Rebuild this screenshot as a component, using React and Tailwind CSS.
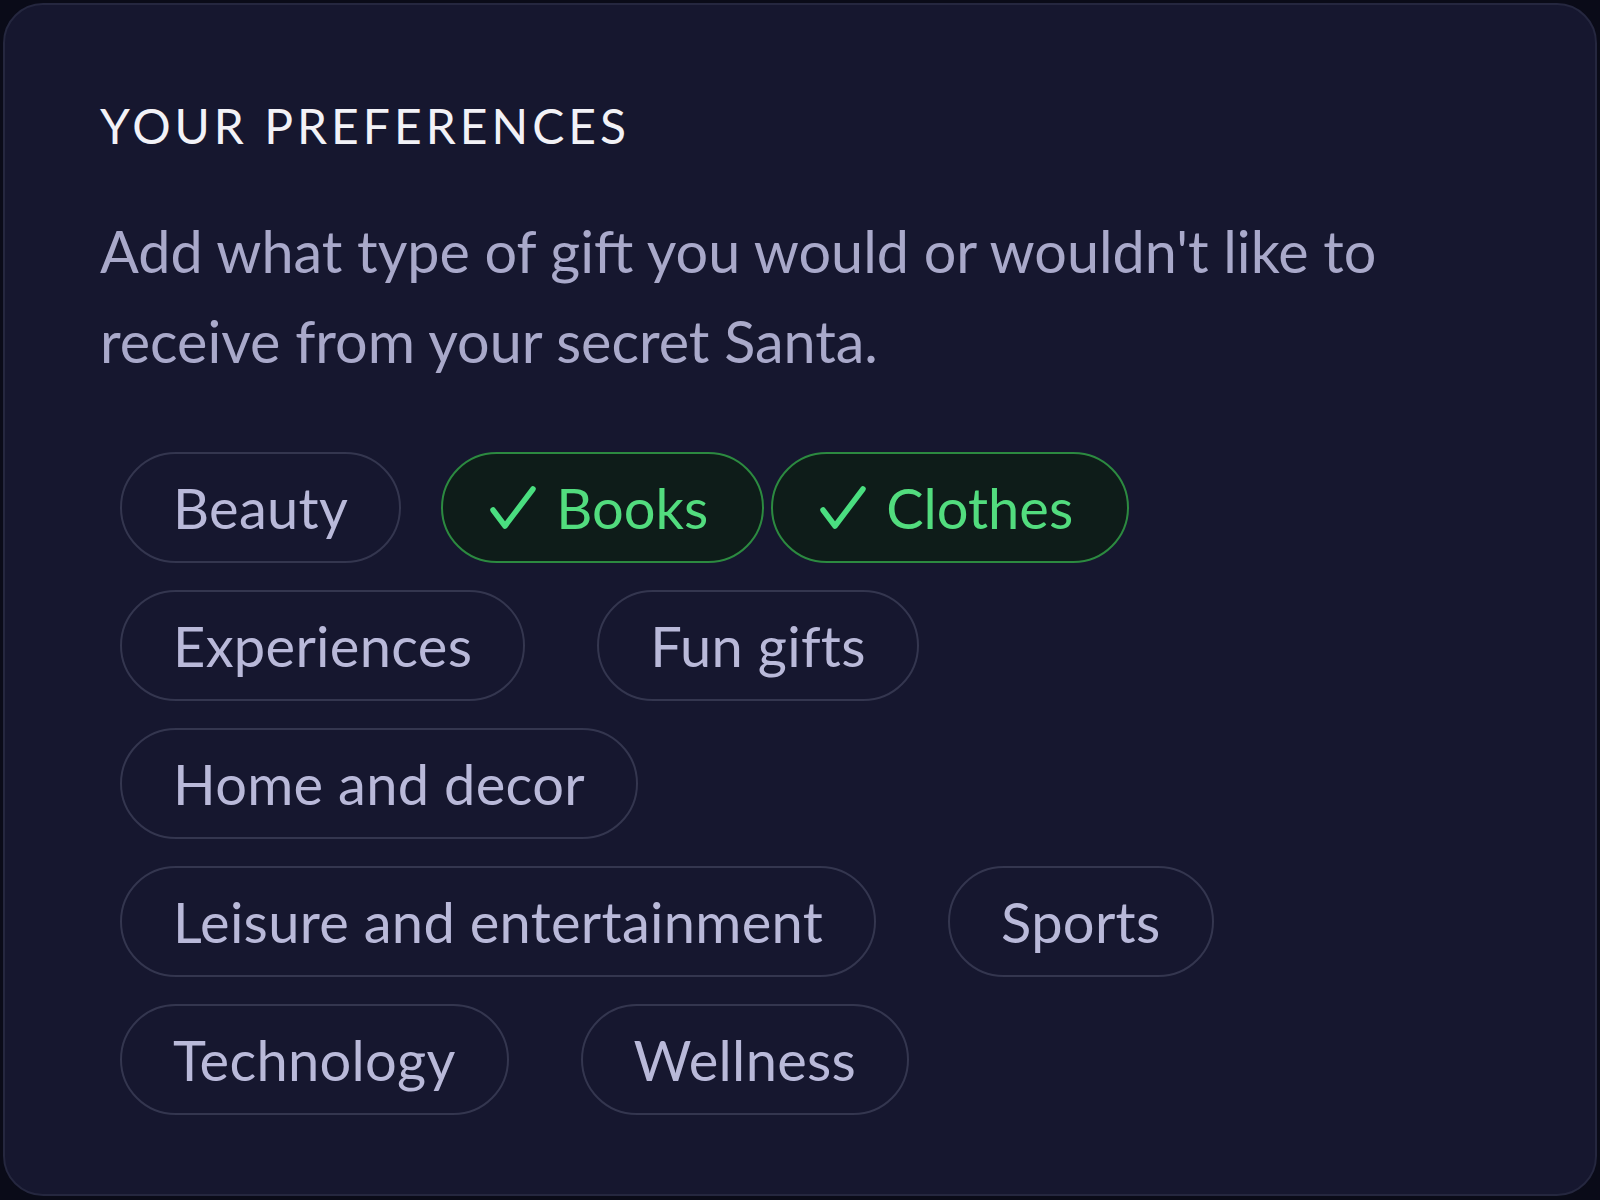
import React from "react";

const categories = [
    { name: "Beauty", selected: false },
    { name: "Books", selected: true },
    { name: "Clothes", selected: true },
    { name: "Experiences", selected: false },
    { name: "Fun gifts", selected: false },
    { name: "Home and decor", selected: false },
    { name: "Leisure and entertainment", selected: false },
    { name: "Sports", selected: false },
    { name: "Technology", selected: false },
    { name: "Wellness", selected: false }
];

const Check = () => (
    <svg width="46" height="44" viewBox="0 0 46 44" fill="none" className="mr-[20px] shrink-0">
        <path d="M3 24 L15 40 L43 3" stroke="#4ade80" strokeWidth="5.5" strokeLinecap="round" strokeLinejoin="round" />
    </svg>
);

const Chip = ({ name, selected }) => {
    if (selected) {
        return (
            <button
                type="button"
                className="ml-[4px] mr-[3px] h-[111px] flex items-center rounded-full border-2 border-[#2c8a40] bg-[#0e1c19] pl-[47px] pr-[54px] text-[56px] leading-none text-[#52dc7e]"
            >
                <Check />
                <span>{name}</span>
            </button>
        );
    }
    return (
        <button
            type="button"
            className="mx-[36px] h-[111px] flex items-center rounded-full border-2 border-[#34364f] px-[51px] text-[56px] leading-none tracking-[0.3px] text-[#b9b9d9]"
        >
            {name}
        </button>
    );
};

const App = () => {
    return (
        <div className="min-h-screen bg-[#0a0b18] p-[3px]" style={{ fontFamily: "Lato, 'Noto Sans', sans-serif" }}>
            <div className="h-[1193px] rounded-[40px] border-2 border-[#25273f] bg-[#16172f] pl-[95px] pr-[195px] pt-[97px]">
                <h2 className="text-[48px] leading-none tracking-[4px] text-[#f2f2f7] font-normal whitespace-nowrap">YOUR PREFERENCES</h2>
                <p className="mt-[56px] text-[57.5px] leading-[90px] text-[#a9a9ca] whitespace-nowrap">
                    Add what type of gift you would or wouldn't like to
                    <br />
                    receive from your secret Santa.
                </p>
                <div className="-ml-[16px] mt-[66px] flex flex-wrap gap-y-[27px]">
                    {categories.map((c) => (
                        <Chip key={c.name} name={c.name} selected={c.selected} />
                    ))}
                </div>
            </div>
        </div>
    );
};

export default App;
